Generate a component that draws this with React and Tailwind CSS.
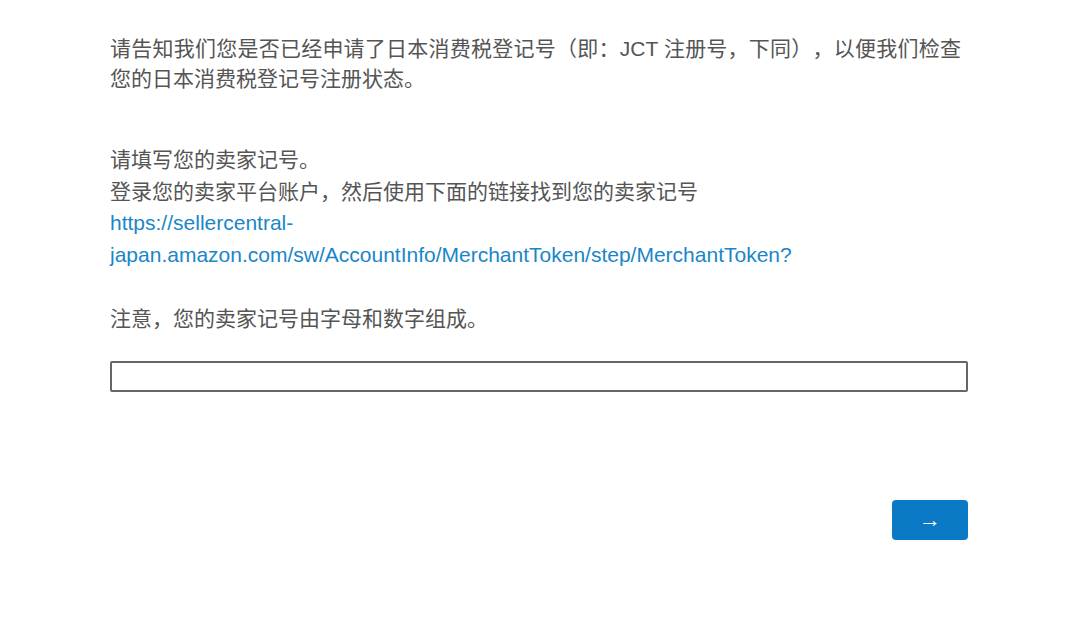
export default function App() {
  return (
    <div className="w-[1080px] h-[642px] bg-white overflow-hidden [text-spacing-trim:space-all]" style={{ fontFamily: '"Liberation Sans", "Noto Sans CJK SC", sans-serif' }}>
      <div className="ml-[110px] w-[858px] pt-[34px] text-[21px] text-[#555555]">
        <p className="w-[851px] leading-[30px] text-justify">
          请告知我们您是否已经申请了日本消费税登记号（即：JCT 注册号，下同），以便我们检查您的日本消费税登记号注册状态。
        </p>
        <div className="mt-[50px] leading-[31.5px]">
          <p>请填写您的卖家记号。</p>
          <p>登录您的卖家平台账户，然后使用下面的链接找到您的卖家记号</p>
          <a href="#" className="text-[#1a86c8] break-words">
            https://sellercentral-
            <br />
            japan.amazon.com/sw/AccountInfo/MerchantToken/step/MerchantToken?
          </a>
        </div>
        <p className="mt-[33px] leading-[31.5px]">注意，您的卖家记号由字母和数字组成。</p>
        <input type="text" className="mt-[26px] block w-[858px] h-[31px] border-2 border-[#666666] rounded-[2px] outline-none" />
        <div className="mt-[108px] flex justify-end">
          <button className="w-[76px] h-[40px] rounded-[4px] bg-[#0a7ac6] text-white text-[22px] flex items-center justify-center">→</button>
        </div>
      </div>
    </div>
  );
}
